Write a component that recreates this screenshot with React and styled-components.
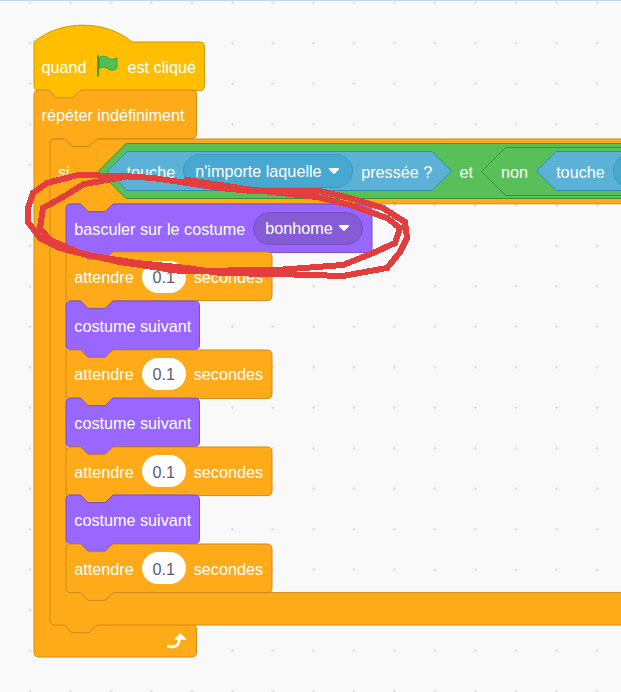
import styled, { createGlobalStyle } from 'styled-components';

const ROW = 48.6;
const RADIUS = 4.8;
const ARM = 16.4;

const COLORS = {
  motion: { fill: '#ffab19', line: '#cf8b17' },
  hat: { fill: '#ffbf00', line: '#cc9900' },
  looks: { fill: '#9966ff', line: '#774dcb' },
};

// notch drawn left to right along y, dip goes downwards
const notch = (x, y) =>
  `H${x + 14.6} L${x + 22} ${y + 7.7} H${x + 39} L${x + 47} ${y} `;
const notchBack = (x, y) =>
  `H${x + 47} L${x + 39} ${y + 7.7} H${x + 22} L${x + 14.6} ${y} `;

const stackPath = (w, h) =>
  `M0 ${RADIUS} Q0 0 ${RADIUS} 0 ${notch(0, 0)}H${w - RADIUS} Q${w} 0 ${w} ${RADIUS} ` +
  `V${h - RADIUS} Q${w} ${h} ${w - RADIUS} ${h} ${notchBack(0, h)}H${RADIUS} Q0 ${h} 0 ${h - RADIUS} Z`;

const hatPath = (w, h) =>
  `M0 0 C26 -22.4 72 -22.4 98 0 H${w - RADIUS} Q${w} 0 ${w} ${RADIUS} ` +
  `V${h - RADIUS} Q${w} ${h} ${w - RADIUS} ${h} ${notchBack(0, h)}H${RADIUS} Q0 ${h} 0 ${h - RADIUS} Z`;

const cPath = (w, head, inner, foot, capped) => {
  const top = head + inner;
  const end = top + foot;
  return (
    `M0 ${RADIUS} Q0 0 ${RADIUS} 0 ${notch(0, 0)}H${w - RADIUS} Q${w} 0 ${w} ${RADIUS} ` +
    `V${head - RADIUS} Q${w} ${head} ${w - RADIUS} ${head} ${notchBack(ARM, head)}` +
    `H${ARM + RADIUS} Q${ARM} ${head} ${ARM} ${head + RADIUS} V${top - RADIUS} ` +
    `Q${ARM} ${top} ${ARM + RADIUS} ${top} ${notch(ARM, top)}H${w - RADIUS} Q${w} ${top} ${w} ${top + RADIUS} ` +
    `V${end - RADIUS} Q${w} ${end} ${w - RADIUS} ${end} ${capped ? '' : notchBack(0, end)}H${RADIUS} Q0 ${end} 0 ${end - RADIUS} Z`
  );
};

const hexPath = (w, h) => {
  const s = h / 2;
  return `M${s} 0.5 H${w - s} L${w - 0.5} ${s} L${w - s} ${h - 0.5} H${s} L0.5 ${s} Z`;
};

const GlobalStyle = createGlobalStyle`
  html, body {
    margin: 0;
    padding: 0;
    background: #f9f9f9;
  }
`;

const Canvas = styled.div`
  position: relative;
  box-sizing: border-box;
  width: 621px;
  height: 692px;
  overflow: hidden;
  padding: 41.8px 0 0 33.5px;
  border-top: 1px solid #c6d4e8;
  background-color: #f9f9f9;
  background-image: radial-gradient(circle, #dddddd 1px, transparent 1.3px);
  background-size: 40.5px 40.5px;
  background-position: 9.75px -18.55px;
  font-family: 'Liberation Sans', Arial, sans-serif;
  font-size: 16.2px;
  color: #fff;
`;

const Script = styled.div`
  display: flex;
  flex-direction: column;
  align-items: flex-start;
  margin-top: -1px;
`;

const Shape = styled.svg`
  position: absolute;
  left: 0;
  top: 0;
  width: 100%;
  height: 100%;
  overflow: visible;
`;

const Block = styled.div`
  position: relative;
  flex: none;
  width: ${p => p.$w}px;
  height: ${ROW}px;
`;

const Row = styled.div`
  position: relative;
  box-sizing: border-box;
  display: flex;
  align-items: center;
  gap: ${p => p.$gap || 8}px;
  height: ${p => p.$h || ROW}px;
  padding-left: 8px;
  white-space: nowrap;
`;

const Label = styled.span`
  position: relative;
  padding-top: ${p => p.$drop || 2}px;
`;

const CBlock = styled.div`
  position: relative;
  flex: none;
  width: ${p => p.$w}px;
`;

const Mouth = styled.div`
  display: flex;
  flex-direction: column;
  align-items: flex-start;
  padding-left: ${ARM}px;
`;

const Foot = styled.div`
  position: relative;
  box-sizing: border-box;
  display: flex;
  align-items: center;
  justify-content: flex-end;
  height: 32.4px;
  width: ${p => p.$w}px;
  padding-right: 9px;
`;

const Hex = styled.div`
  position: relative;
  flex: none;
  display: flex;
  align-items: center;
  box-sizing: border-box;
  width: ${p => p.$w}px;
  height: ${p => p.$h}px;
  padding-left: ${p => p.$pad}px;
  gap: 8px;
`;

const Menu = styled.span`
  position: relative;
  flex: none;
  box-sizing: border-box;
  display: inline-flex;
  align-items: center;
  justify-content: space-between;
  width: ${p => p.$w}px;
  height: ${p => p.$h}px;
  padding: 0 12px 0 11px;
  border-radius: 17px;
  background: ${p => p.$fill};
  border: 1px solid ${p => p.$line};
`;

const NumberField = styled.span`
  flex: none;
  display: inline-flex;
  align-items: center;
  justify-content: center;
  box-sizing: border-box;
  width: 44px;
  height: 32px;
  padding-top: 2px;
  border-radius: 16px;
  background: #fff;
  color: #575e75;
`;

const Scribble = styled.svg`
  position: absolute;
  left: 0;
  top: -1px;
  width: 621px;
  height: 692px;
  pointer-events: none;
`;

const Arrow = () => (
  <svg width="12" height="8" viewBox="0 0 12 8">
    <path d="M1.6 1 H10.4 Q11.8 1 11 2.2 L6.9 6.6 Q6 7.4 5.1 6.6 L1 2.2 Q0.2 1 1.6 1 Z" fill="#fff" />
  </svg>
);

const Flag = () => (
  <svg width="21" height="22" viewBox="0 0 21 22">
    <path d="M1 1.2 V20.5" stroke="#45993d" strokeWidth="2.2" strokeLinecap="round" />
    <path
      d="M2.5 2.2 C6.5 0 9.5 1.5 12 3.5 C14.5 4.8 17.5 4.4 20 2.6 V13.4 C17.5 15.4 14.5 15.8 12 14.6 C9.5 12.6 6.5 11.2 2.5 13.4 Z"
      fill="#4cbf56"
      stroke="#45993d"
      strokeWidth="0.8"
    />
  </svg>
);

const RepeatArrow = () => (
  <svg width="20" height="16" viewBox="0 0 20 16">
    <path d="M1.5 13.2 C7 14.8 12 13.5 12.2 6" fill="none" stroke="#fff" strokeWidth="3" strokeLinecap="round" />
    <path d="M7.6 6.2 L13.4 0.6 L19 6.2 Z" fill="#fff" stroke="#fff" strokeWidth="0.8" strokeLinejoin="round" />
  </svg>
);

const Wait = () => (
  <Block $w={206}>
    <Shape><path d={stackPath(206, ROW)} fill={COLORS.motion.fill} stroke={COLORS.motion.line} /></Shape>
    <Row>
      <Label>attendre</Label>
      <NumberField>0.1</NumberField>
      <Label>secondes</Label>
    </Row>
  </Block>
);

const NextCostume = () => (
  <Block $w={133.5}>
    <Shape><path d={stackPath(133.5, ROW)} fill={COLORS.looks.fill} stroke={COLORS.looks.line} /></Shape>
    <Row><Label>costume suivant</Label></Row>
  </Block>
);

const KeyHex = ({ w, children }) => (
  <Hex $w={w} $h={40} $pad={20}>
    <Shape><path d={hexPath(w, 40)} fill="#5cb1d6" stroke="#2e8eb8" /></Shape>
    {children}
  </Hex>
);

const App = () => {
  const ifInner = ROW * 8;
  const foreverInner = 64.8 + ifInner + 32.4;

  return (
    <Canvas>
      <GlobalStyle />
      <Script>
        <Block $w={170.5}>
          <Shape><path d={hatPath(170.5, ROW)} fill={COLORS.hat.fill} stroke={COLORS.hat.line} /></Shape>
          <Row $gap={10}>
            <Label $drop={3}>quand</Label>
            <Flag />
            <Label $drop={3}>est cliqué</Label>
          </Row>
        </Block>

        <CBlock $w={162.5}>
          <Shape>
            <path d={cPath(162.5, ROW, foreverInner, 32.4, true)} fill={COLORS.motion.fill} stroke={COLORS.motion.line} />
          </Shape>
          <Row><Label>répéter indéfiniment</Label></Row>
          <Mouth>
            <CBlock $w={640}>
              <Shape>
                <path d={cPath(640, 64.8, ifInner, 32.4)} fill={COLORS.motion.fill} stroke={COLORS.motion.line} />
              </Shape>
              <Row $h={64.8} $gap={28}>
                <Label>si</Label>
                <Hex $w={560} $h={56} $pad={9}>
                  <Shape><path d={hexPath(560, 56)} fill="#59c059" stroke="#389438" /></Shape>
                  <KeyHex w={345}>
                    <Label>touche</Label>
                    <Menu $w={170} $h={34} $fill="#47a8d1" $line="#3d99c2">
                      n'importe laquelle
                      <Arrow />
                    </Menu>
                    <Label>pressée ?</Label>
                  </KeyHex>
                  <Label>et</Label>
                  <Hex $w={200} $h={49} $pad={20}>
                    <Shape><path d={hexPath(200, 49)} fill="#59c059" stroke="#389438" /></Shape>
                    <Label>non</Label>
                    <KeyHex w={160}>
                      <Label>touche</Label>
                      <Menu $w={120} $h={34} $fill="#47a8d1" $line="#3d99c2" />
                    </KeyHex>
                  </Hex>
                </Hex>
              </Row>
              <Mouth>
                <Block $w={306}>
                  <Shape><path d={stackPath(306, ROW)} fill={COLORS.looks.fill} stroke={COLORS.looks.line} /></Shape>
                  <Row>
                    <Label>basculer sur le costume</Label>
                    <Menu $w={110} $h={33} $fill="#855cd6" $line="#774dcb">
                      bonhome
                      <Arrow />
                    </Menu>
                  </Row>
                </Block>
                <Wait />
                <NextCostume />
                <Wait />
                <NextCostume />
                <Wait />
                <NextCostume />
                <Wait />
              </Mouth>
              <Foot $w={640} />
            </CBlock>
          </Mouth>
          <Foot $w={162.5}>
            <RepeatArrow />
          </Foot>
        </CBlock>
      </Script>

      <Scribble viewBox="0 0 621 692" shapeRendering="crispEdges">
        <g fill="none" stroke="#e33d3d" strokeWidth="6" strokeLinejoin="round" strokeLinecap="round">
          <path d="M78 175 L120 176 L153 178 L187 183 L220 188 L253 191 L320 191 L350 198 L383 208 L405 222 L407 238 L400 252 L387 268 L343 276 L277 274 L220 273 L187 268 L137 263 L87 255 L60 248 L40 238 L28 222 L28 208 L33 193 L47 183 L78 175" />
          <path d="M130 176 L84 184 L63 197 L43 208 L40 228 L50 240 L80 253 L120 262 L180 271 L277 270 L343 265 L373 253 L395 243 L400 228 L387 218 L350 205 L317 197 L253 190 L187 180" />
        </g>
      </Scribble>
    </Canvas>
  );
};

export default App;
